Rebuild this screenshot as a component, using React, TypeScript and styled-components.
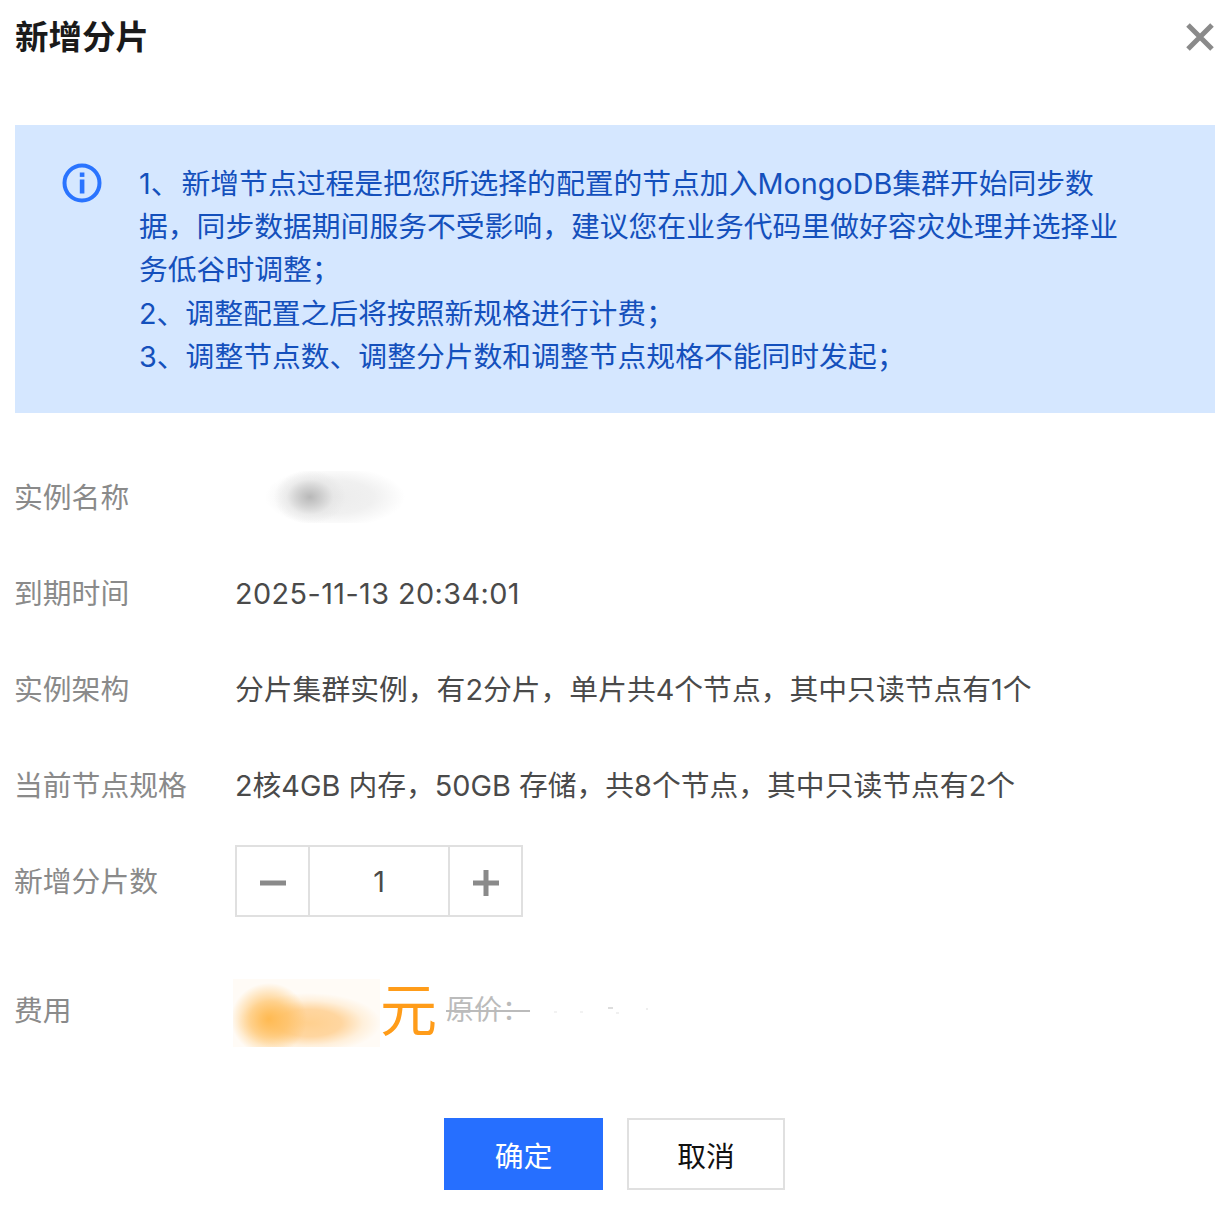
import React from 'react';
import styled, { createGlobalStyle } from 'styled-components';

const GlobalStyle = createGlobalStyle`
  html, body {
    margin: 0;
    padding: 0;
    background: #ffffff;
  }
`;

const Dialog = styled.div`
  width: 1224px;
  height: 1219px;
  box-sizing: border-box;
  padding: 0 9px 0 14px;
  font-family: 'Inter', 'Noto Sans CJK SC', sans-serif;
  overflow: hidden;
`;

const Header = styled.div`
  display: flex;
  align-items: center;
  justify-content: space-between;
  height: 74px;
  margin-bottom: 51px;
`;

const Title = styled.h2`
  margin: 0 0 0 1px;
  font-size: 33.5px;
  line-height: 74px;
  font-weight: 700;
  color: #1a1a1a;
`;

const CloseButton = styled.button`
  display: flex;
  padding: 0;
  margin-right: -1px;
  margin-bottom: 1px;
  border: 0;
  background: none;
  cursor: pointer;
`;

const Alert = styled.div`
  display: flex;
  width: 1200px;
  height: 288px;
  box-sizing: border-box;
  margin-left: 1px;
  padding: 36px 0 36px 47px;
  gap: 37px;
  background: #d5e7ff;
`;

const AlertIcon = styled.svg`
  flex: none;
  width: 40px;
  height: 40px;
  margin-top: 2px;
`;

const AlertText = styled.div`
  margin-top: 1px;
  font-size: 28.8px;
  line-height: 43.2px;
  color: #1450bc;
  white-space: nowrap;
`;

const FirstMarker = styled.span`
  margin-right: 2px;
`;

const Form = styled.div`
  display: flex;
  flex-direction: column;
  padding-top: 36px;
`;

const Row = styled.div`
  display: flex;
  align-items: center;
  height: 96px;
`;

const FeeRow = styled(Row)`
  height: 68px;
  margin-top: 50px;
`;

const Label = styled.div`
  flex: none;
  width: 221px;
  margin-bottom: 4px;
  font-size: 28.8px;
  color: #8a8a8a;
`;

const FeeLabel = styled(Label)`
  margin-bottom: 10px;
`;

const Value = styled.div`
  margin-bottom: 4px;
  font-size: 28.8px;
  color: #4a4a4a;
  white-space: nowrap;
`;

const DateValue = styled(Value)`
  margin-bottom: 0;
  letter-spacing: 0.42px;
`;

const Mask = styled.div<{ $w: number; $h: number }>`
  width: ${p => p.$w}px;
  height: ${p => p.$h}px;
  overflow: hidden;
  flex: none;
`;

const NameBlur = styled.div`
  width: 140px;
  height: 100%;
  margin-left: 30px;
  background: radial-gradient(ellipse 36px 27px at 45px 26px, #b8b8b8 0%, #cdcdcd 30%, rgba(225, 225, 225, 0.5) 65%, rgba(225, 225, 225, 0) 100%),
    radial-gradient(ellipse 70px 30px at 70px 26px, #ececec 0%, #f0f0f0 55%, rgba(250, 250, 250, 0) 100%);
`;

const PriceBlur = styled.div`
  width: 100%;
  height: 100%;
  background: radial-gradient(ellipse 38px 36px at 36px 40px, #ffba52 0%, rgba(255, 186, 82, 0.6) 50%, rgba(255, 186, 82, 0) 100%),
    radial-gradient(ellipse 72px 30px at 76px 44px, #ffd08f 0%, #ffd6a0 45%, rgba(255, 226, 186, 0.45) 75%, rgba(255, 226, 186, 0) 100%),
    #fffbf6;
`;

const Stepper = styled.div`
  display: flex;
  width: 288px;
  height: 72px;
  box-sizing: border-box;
  border: 2px solid #e0e0e0;
`;

const StepButton = styled.button`
  flex: none;
  width: 71px;
  padding: 3px 0 0;
  border: 0;
  background: #ffffff;
  display: flex;
  align-items: center;
  justify-content: center;
`;

const StepInput = styled.div`
  flex: 1;
  display: flex;
  align-items: center;
  justify-content: center;
  border-left: 2px solid #e0e0e0;
  border-right: 2px solid #e0e0e0;
  font-size: 28.8px;
  color: #4a4a4a;
`;

const PriceWrap = styled.div`
  display: flex;
  align-items: center;
  margin-left: -2px;
`;

const Unit = styled.span`
  margin-bottom: 5px;
  font-size: 57px;
  line-height: 68px;
  color: #ff9c19;
`;

const OriginalPrice = styled.span`
  margin: 0 0 10px 9px;
  font-size: 28px;
  color: #bbbbbb;
  text-decoration: line-through;
`;

const Specks = styled.svg`
  flex: none;
  width: 120px;
  height: 12px;
  margin-bottom: 8px;
`;

const Footer = styled.div`
  display: flex;
  justify-content: center;
  gap: 24px;
  width: 1201px;
  margin-top: 71px;
`;

const ActionButton = styled.button<{ $primary?: boolean }>`
  width: ${p => (p.$primary ? 159 : 158)}px;
  height: 72px;
  box-sizing: border-box;
  padding-top: 2px;
  border: 2px solid ${p => (p.$primary ? '#266fff' : '#e0e0e0')};
  background: ${p => (p.$primary ? '#266fff' : '#ffffff')};
  color: ${p => (p.$primary ? '#ffffff' : '#111111')};
  font-family: inherit;
  font-size: 28.8px;
  cursor: pointer;
`;

export default function App() {
  return (
    <>
      <GlobalStyle />
      <Dialog>
        <Header>
          <Title>新增分片</Title>
          <CloseButton aria-label="关闭">
            <svg width="32" height="32" viewBox="0 0 32 32" fill="none">
              <path d="M4 4L28 28M28 4L4 28" stroke="#8a8a8a" strokeWidth="5" />
            </svg>
          </CloseButton>
        </Header>

        <Alert>
          <AlertIcon viewBox="0 0 40 40" fill="none">
            <circle cx="20" cy="20" r="17.5" stroke="#2a74ff" strokeWidth="4" />
            <rect x="17.8" y="9.5" width="4.6" height="4.4" fill="#2a74ff" />
            <rect x="17.8" y="16.5" width="4.6" height="14" fill="#2a74ff" />
          </AlertIcon>
          <AlertText>
            <FirstMarker>1、</FirstMarker>新增节点过程是把您所选择的配置的节点加入MongoDB集群开始同步数
            <br />
            据，同步数据期间服务不受影响，建议您在业务代码里做好容灾处理并选择业
            <br />
            务低谷时调整；
            <br />
            2、调整配置之后将按照新规格进行计费；
            <br />
            3、调整节点数、调整分片数和调整节点规格不能同时发起；
          </AlertText>
        </Alert>

        <Form>
          <Row>
            <Label>实例名称</Label>
            <Mask $w={170} $h={52}>
              <NameBlur />
            </Mask>
          </Row>
          <Row>
            <Label>到期时间</Label>
            <DateValue>2025-11-13 20:34:01</DateValue>
          </Row>
          <Row>
            <Label>实例架构</Label>
            <Value>分片集群实例，有2分片，单片共4个节点，其中只读节点有1个</Value>
          </Row>
          <Row>
            <Label>当前节点规格</Label>
            <Value>2核4GB 内存，50GB 存储，共8个节点，其中只读节点有2个</Value>
          </Row>
          <Row>
            <Label>新增分片数</Label>
            <Stepper>
              <StepButton aria-label="减少">
                <svg width="26" height="26" viewBox="0 0 26 26">
                  <rect x="0" y="10.5" width="26" height="5" fill="#8a8a8a" />
                </svg>
              </StepButton>
              <StepInput>1</StepInput>
              <StepButton aria-label="增加">
                <svg width="26" height="26" viewBox="0 0 26 26">
                  <path d="M10.5 0h5v10.5H26v5H15.5V26h-5V15.5H0v-5h10.5z" fill="#8a8a8a" />
                </svg>
              </StepButton>
            </Stepper>
          </Row>
          <FeeRow>
            <FeeLabel>费用</FeeLabel>
            <PriceWrap>
              <Mask $w={147} $h={68}>
                <PriceBlur />
              </Mask>
              <Unit>元</Unit>
              <OriginalPrice>原价：</OriginalPrice>
              <Specks viewBox="0 0 120 12">
                <rect x="24" y="8" width="3" height="2" fill="#f2f2f2" />
                <rect x="50" y="8" width="3" height="2" fill="#f2f2f2" />
                <rect x="78" y="4" width="5" height="2" fill="#dddddd" />
                <rect x="86" y="9" width="3" height="2" fill="#f0f0f0" />
                <rect x="116" y="5" width="2" height="2" fill="#eeeeee" />
              </Specks>
            </PriceWrap>
          </FeeRow>
        </Form>

        <Footer>
          <ActionButton $primary>确定</ActionButton>
          <ActionButton>取消</ActionButton>
        </Footer>
      </Dialog>
    </>
  );
}
